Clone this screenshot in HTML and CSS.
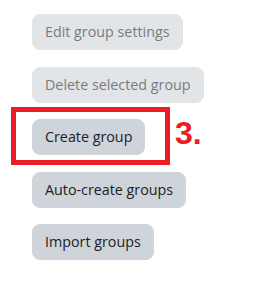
FILE: index.html
```html
<!DOCTYPE html>
<html>
<head>
<meta charset="utf-8">
<link rel="stylesheet" href="styles.css">
</head>
<body>
<div class="panel">
  <button class="btn" disabled>Edit group settings</button>
  <button class="btn" disabled>Delete selected group</button>
  <div class="callout-wrap">
    <button class="btn">Create group</button>
    <div class="callout-box"></div>
    <div class="callout-label">3.</div>
  </div>
  <button class="btn">Auto-create groups</button>
  <button class="btn">Import groups</button>
</div>
</body>
</html>
```
FILE: styles.css
```css
html, body {
  margin: 0;
  padding: 0;
  background: #ffffff;
}
.panel {
  display: flex;
  flex-direction: column;
  align-items: flex-start;
  gap: 16.5px;
  padding: 14px 0 0 32px;
}
.btn {
  font-family: "Open Sans", "Noto Sans", sans-serif;
  font-size: 14.3px;
  line-height: 22px;
  padding: 6px 12px;
  border: 1px solid #ced4da;
  border-radius: 8px;
  background: #ced4da;
  color: #1d2125;
  cursor: pointer;
}
.btn:disabled {
  opacity: 0.6;
  cursor: default;
}
.callout-wrap {
  position: relative;
}
.callout-box {
  position: absolute;
  left: -21px;
  top: -12px;
  width: 149px;
  height: 48px;
  border: 5px solid #ec1c24;
}
.callout-label {
  position: absolute;
  left: 143px;
  top: -4px;
  font-family: "Liberation Sans", Arial, sans-serif;
  font-weight: bold;
  font-size: 32px;
  color: #ec1c24;
}
```
